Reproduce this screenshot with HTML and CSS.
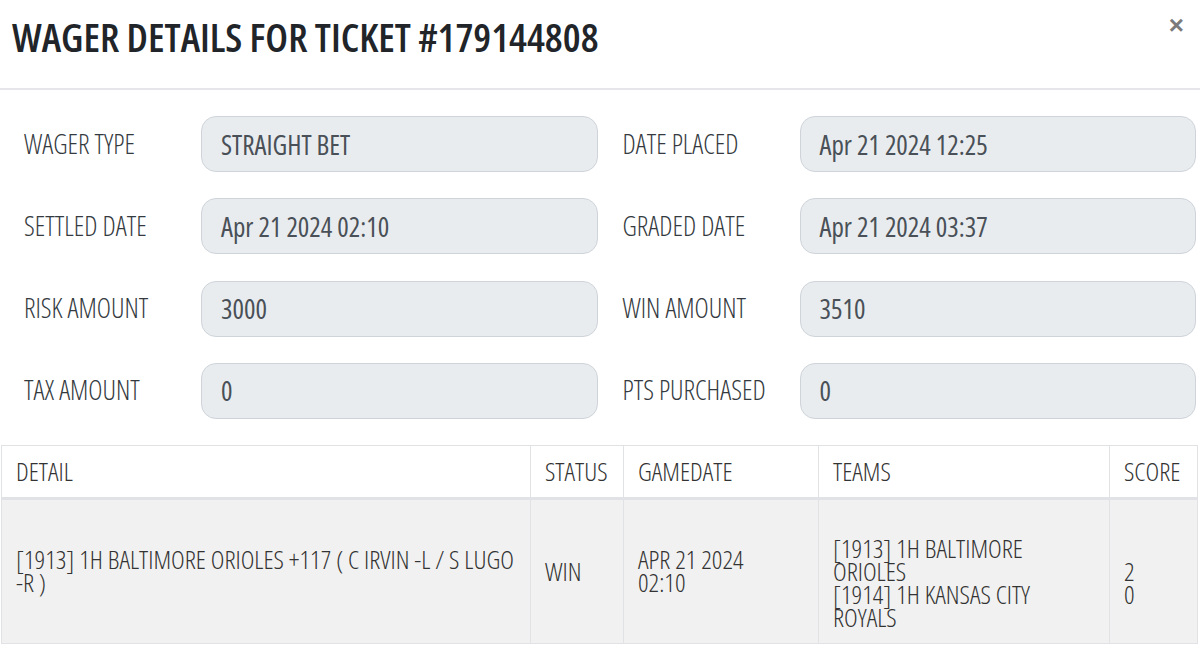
FILE: index.html
```html
<!DOCTYPE html>
<html lang="en">
<head>
<meta charset="utf-8">
<title>Wager Details</title>
<link rel="stylesheet" href="styles.css">
</head>
<body>
<div class="modal">
  <header class="modal-header">
    <h2 class="modal-title">WAGER DETAILS FOR TICKET #179144808</h2>
    <button class="close" type="button" aria-label="Close">×</button>
  </header>
  <div class="modal-body">
    <div class="form-grid">
      <div class="field"><span class="label">WAGER TYPE</span><div class="input">STRAIGHT BET</div></div>
      <div class="field"><span class="label">DATE PLACED</span><div class="input">Apr 21 2024 12:25</div></div>
      <div class="field"><span class="label">SETTLED DATE</span><div class="input">Apr 21 2024 02:10</div></div>
      <div class="field"><span class="label">GRADED DATE</span><div class="input">Apr 21 2024 03:37</div></div>
      <div class="field"><span class="label">RISK AMOUNT</span><div class="input">3000</div></div>
      <div class="field"><span class="label">WIN AMOUNT</span><div class="input">3510</div></div>
      <div class="field"><span class="label">TAX AMOUNT</span><div class="input">0</div></div>
      <div class="field"><span class="label">PTS PURCHASED</span><div class="input">0</div></div>
    </div>
    <table class="detail-table">
      <colgroup>
        <col class="c-detail"><col class="c-status"><col class="c-date"><col class="c-teams"><col class="c-score">
      </colgroup>
      <thead>
        <tr><th>DETAIL</th><th>STATUS</th><th>GAMEDATE</th><th>TEAMS</th><th>SCORE</th></tr>
      </thead>
      <tbody>
        <tr>
          <td>[1913] 1H BALTIMORE ORIOLES +117 ( C IRVIN -L / S LUGO<br>-R )</td>
          <td>WIN</td>
          <td>APR 21 2024<br>02:10</td>
          <td class="lowered">[1913] 1H BALTIMORE<br>ORIOLES<br>[1914] 1H KANSAS CITY<br>ROYALS</td>
          <td class="lowered">2<br>0</td>
        </tr>
      </tbody>
    </table>
  </div>
</div>
</body>
</html>
```

FILE: styles.css
```css
* { box-sizing: border-box; }

html, body {
  margin: 0;
  padding: 0;
  background: #ffffff;
}

body {
  font-family: "Open Sans", "DejaVu Sans Condensed", sans-serif;
  font-stretch: 75%;
  color: #333;
  width: 1200px;
  height: 652px;
  overflow: hidden;
}

.modal {
  width: 1200px;
}

.modal-header {
  display: flex;
  justify-content: space-between;
  align-items: flex-start;
  height: 90px;
  padding: 11px 12px 0 12px;
  border-bottom: 2px solid #e6e6ea;
}

.modal-title {
  margin: 0;
  font-size: 40px;
  font-weight: 650;
  line-height: 52px;
  color: #212529;
}

.close {
  border: 0;
  background: none;
  padding: 0;
  margin: 1px 4px 0 0;
  font-family: "Liberation Sans", sans-serif;
  font-size: 26px;
  font-weight: 700;
  line-height: 26px;
  color: #7b7b7b;
  cursor: pointer;
}

.modal-body {
  padding: 26px 4px 0 1px;
}

.form-grid {
  display: grid;
  grid-template-columns: 1fr 1fr;
  column-gap: 25px;
  row-gap: 26.3px;
  padding-left: 23px;
}

.field {
  display: flex;
  align-items: center;
}

.label {
  width: 177px;
  flex: none;
  font-size: 27px;
  font-weight: 300;
  color: #343a40;
  padding-bottom: 2px;
}

.input {
  flex: 1;
  height: 56px;
  display: flex;
  align-items: center;
  padding: 0 19px 0;
  background: #e9ecef;
  border: 1px solid #ced4da;
  border-radius: 15px;
  font-size: 27px;
  font-weight: 400;
  color: #495057;
}

.detail-table {
  margin-top: 26px;
  width: 1196px;
  border-collapse: collapse;
  table-layout: fixed;
  font-size: 26px;
  font-weight: 300;
  color: #333;
}

.c-detail { width: 529px; }
.c-status { width: 93px; }
.c-date { width: 195px; }
.c-teams { width: 291px; }
.c-score { width: 88px; }

.detail-table th,
.detail-table td {
  border: 1px solid #e0e2e6;
  text-align: left;
  font-weight: 300;
  padding: 0 14px;
  vertical-align: middle;
  white-space: nowrap;
}

.detail-table th {
  height: 53px;
  background: #ffffff;
  border-bottom: 3px solid #e0e2e6;
}

.detail-table td {
  height: 145px;
  background: #f1f1f1;
  line-height: 23px;
}

.detail-table td.lowered {
  padding-top: 24px;
}
```
